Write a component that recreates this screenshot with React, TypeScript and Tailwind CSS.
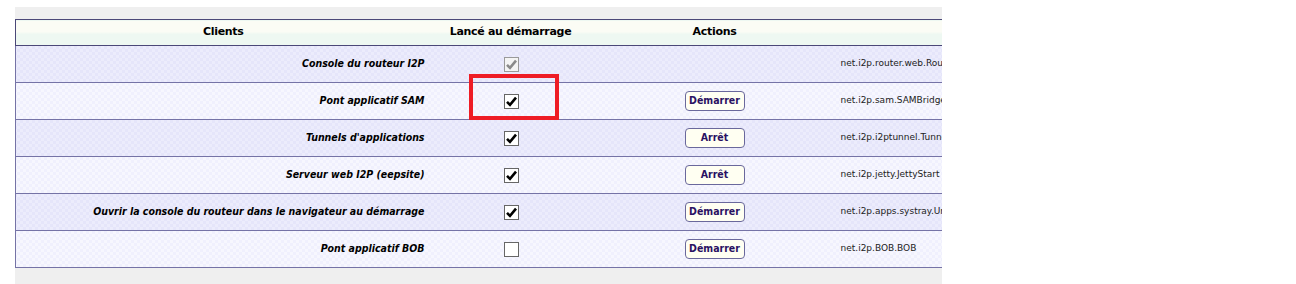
import React from "react";

type Row = {
  name: string;
  checked: boolean;
  disabled?: boolean;
  action?: string;
  cls: string;
};

const rows: Row[] = [
  { name: "Console du routeur I2P", checked: true, disabled: true, cls: "net.i2p.router.web.RouterConsoleRunner" },
  { name: "Pont applicatif SAM", checked: true, action: "Démarrer", cls: "net.i2p.sam.SAMBridge" },
  { name: "Tunnels d'applications", checked: true, action: "Arrêt", cls: "net.i2p.i2ptunnel.TunnelControllerGroup" },
  { name: "Serveur web I2P (eepsite)", checked: true, action: "Arrêt", cls: "net.i2p.jetty.JettyStart" },
  { name: "Ouvrir la console du routeur dans le navigateur au démarrage", checked: true, action: "Démarrer", cls: "net.i2p.apps.systray.UrlLauncher" },
  { name: "Pont applicatif BOB", checked: false, action: "Démarrer", cls: "net.i2p.BOB.BOB" },
];

function Check({ checked, disabled }: { checked: boolean; disabled?: boolean }) {
  return (
    <span
      className={
        "inline-flex h-[15px] w-[15px] items-center justify-center border " +
        (disabled ? "border-[#9a9a9a] bg-[#f4f4f4]" : "border-[#666666] bg-white")
      }
    >
      {checked && (
        <svg width="13" height="13" viewBox="0 0 13 13">
          <path
            d="M2 6.8 L5 9.8 L11 2.6"
            fill="none"
            stroke={disabled ? "#8a8a8a" : "#000"}
            strokeWidth="2.6"
            strokeLinecap="butt"
            strokeLinejoin="miter"
          />
        </svg>
      )}
    </span>
  );
}

export default function App() {
  return (
    <div className="h-[284px] w-[1296px] bg-white">
      <div className="relative ml-[15px] mt-[7px] h-[277px] w-[927px] overflow-hidden bg-[#efefef] pt-[12px]">
        <table
          className="w-[1100px] table-fixed border-collapse"
          style={{ fontFamily: '"DejaVu Sans", Verdana, sans-serif' }}
        >
          <colgroup>
            <col className="w-[415px]" />
            <col className="w-[160px]" />
            <col className="w-[248px]" />
            <col />
          </colgroup>
          <thead>
            <tr className="h-[26px] border-y border-l border-[#4b4878] bg-[linear-gradient(to_bottom,#fbfcf5_0%,#fbfcf5_45%,#eef8f2_55%,#eef8f2_100%)]">
              <th className="text-center text-[11px] font-bold tracking-[-0.3px] text-black">Clients</th>
              <th className="text-center text-[11px] font-bold tracking-[-0.3px] text-black">Lancé au démarrage</th>
              <th className="text-center text-[11px] font-bold tracking-[-0.3px] text-black">Actions</th>
              <th />
            </tr>
          </thead>
          <tbody>
            {rows.map((r, i) => (
              <tr
                key={i}
                className={
                  "h-[37px] border-b border-l border-[#7573a6] bg-size-[6px_6px] " +
                  (i % 2 === 0
                    ? "bg-[#e8e8fb] bg-[image:repeating-conic-gradient(#e5e5fa_0_25%,#ececfc_0_50%)]"
                    : "bg-[#f3f3fd] bg-[image:repeating-conic-gradient(#f0f0fd_0_25%,#f7f7fe_0_50%)]")
                }
              >
                <td
                  className="pr-[6px] text-right text-[10.5px] font-bold italic text-black"
                  style={{ fontFamily: '"DejaVu Sans Condensed", "DejaVu Sans", sans-serif' }}
                >
                  {r.name}
                </td>
                <td className="text-center align-middle">
                  <div className="flex items-center justify-center pl-[2px]">
                    <Check checked={r.checked} disabled={r.disabled} />
                  </div>
                </td>
                <td className="text-center align-middle">
                  {r.action && (
                    <div className="flex items-center justify-center">
                      <span
                        className="inline-flex h-[20px] w-[60px] items-center justify-center rounded-[4px] border border-[#6a689c] bg-[#fffff2] text-[10.5px] font-bold text-[#2a1262]"
                        style={{ fontFamily: '"DejaVu Sans Condensed", "DejaVu Sans", sans-serif' }}
                      >
                        {r.action}
                      </span>
                    </div>
                  )}
                </td>
                <td className="whitespace-nowrap pl-[2px] text-[9px] text-[#222]">{r.cls}</td>
              </tr>
            ))}
          </tbody>
        </table>
        <div className="absolute left-[454px] top-[67px] h-[46px] w-[90px] border-[4px] border-[#ee1c25]" />
      </div>
    </div>
  );
}
